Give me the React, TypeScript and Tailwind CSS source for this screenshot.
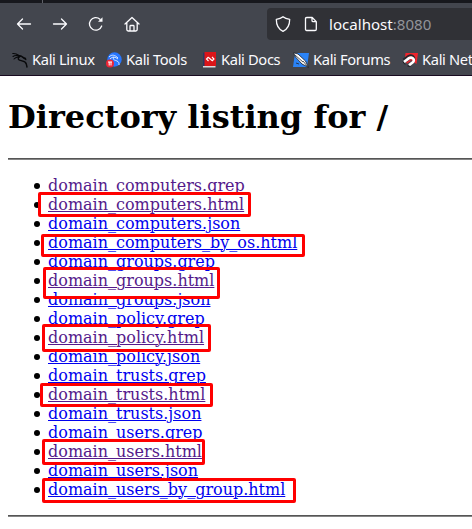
import type { ReactNode } from 'react';

type Entry = { name: string; visited?: boolean; mark?: string };

const entries: Entry[] = [
  { name: 'domain_computers.grep', visited: true },
  { name: 'domain_computers.html', visited: true, mark: '-left-[10px] -top-[3px] w-[213px] h-[25px]' },
  { name: 'domain_computers.json' },
  { name: 'domain_computers_by_os.html', mark: '-left-[7px] top-[1px] w-[264px] h-[23px]' },
  { name: 'domain_groups.grep' },
  { name: 'domain_groups.html', visited: true, mark: '-left-[5px] -top-[4px] w-[177px] h-[32px]' },
  { name: 'domain_groups.json' },
  { name: 'domain_policy.grep' },
  { name: 'domain_policy.html', visited: true, mark: '-left-[6px] -top-[4px] w-[169px] h-[28px]' },
  { name: 'domain_policy.json' },
  { name: 'domain_trusts.grep' },
  { name: 'domain_trusts.html', visited: true, mark: '-left-[8px] -top-[2px] w-[173px] h-[24px]' },
  { name: 'domain_trusts.json' },
  { name: 'domain_users.grep' },
  { name: 'domain_users.html', visited: true, mark: '-left-[6px] -top-[3px] w-[163px] h-[26px]' },
  { name: 'domain_users.json' },
  { name: 'domain_users_by_group.html', mark: '-left-[6px] -top-[2px] w-[254px] h-[25px]' },
];

function Glyph({ children }: { children: ReactNode }) {
  return (
    <svg width="16" height="16" viewBox="0 0 16 16" fill="none" stroke="#fbfbfe" strokeWidth="1.3" strokeLinecap="round" strokeLinejoin="round" className="shrink-0">
      {children}
    </svg>
  );
}

function Dragon({ color }: { color: string }) {
  return (
    <g fill="none" stroke={color} strokeLinecap="round" strokeLinejoin="round">
      <path d="M.7 1.5C3 1.2 5 2 6.700 3.500M1 4.500C3 3 5 3.200 7.500 4.200M2 7C3.500 5.300 5 5 7 5" strokeWidth="1.100" />
      <path d="M5 3.500C8 3.300 10 4.300 11.300 5.600L13.500 6.500M8.500 4C6 5 5.500 7.200 7.500 8.200C10 9.300 13.500 8.500 14.300 12L15 15" strokeWidth="1.400" />
      <path d="M11 5.500L13.800 7.600" strokeWidth="1.300" />
    </g>
  );
}

function LinuxIcon() {
  return <svg width="16" height="16" viewBox="0 0 16 16"><Dragon color="#08090b" /></svg>;
}

function ToolsIcon() {
  return (
    <svg width="16" height="16" viewBox="0 0 16 16">
      <circle cx="8.500" cy="7.500" r="7.200" fill="#2777ff" />
      <path d="M3 5C6 2 9 3 12 6M4 7C7 4 9 5 12 7M8 5C6 8 9 8 11 9C13 10 13 11 13 13" fill="none" stroke="#d8e8ff" strokeWidth="1" />
      <circle cx="4" cy="11.500" r="4" fill="#ee2535" />
      <path d="M2 10H6M3.200 10V13.500M5 10V13.500" stroke="#fff" strokeWidth="1" />
    </svg>
  );
}

function DocsIcon() {
  return (
    <svg width="13" height="16" viewBox="0 0 13 16">
      <path d="M0 1L2 0V14L0 15Z" fill="#293764" />
      <path d="M1.500 0H13V14H1.500Z" fill="#db1519" />
      <path d="M0 14H12.500V15.500H0Z" fill="#ddd9dc" />
      <path d="M5.500 5L3.500 7L5.500 9M9 5L11 7L9 9M5.500 5.500L9 8.500" fill="none" stroke="#fff" strokeWidth="1.100" />
    </svg>
  );
}

function ForumsIcon() {
  return (
    <svg width="16" height="16" viewBox="0 0 16 16">
      <path d="M2 1H16L14 15H0Z" fill="#2b83f6" />
      <path d="M.5.800L5 2L12.500 9L15.500 15.300L9 12L2.500 5Z" fill="#fff" stroke="#17191e" strokeWidth=".8" />
      <path d="M2 3L10 10M10 9L14.500 14.500M3 11L6 12" stroke="#22252c" strokeWidth=".8" />
    </svg>
  );
}

function HunterIcon() {
  return (
    <svg width="16" height="16" viewBox="0 0 16 16">
      <path d="M3.500 1H16L14.500 12L9 8L3 5Z" fill="#ef242c" />
      <path d="M1.200 7.500L6.500 3.800C10 2 13 5 12.500 7.500" stroke="#25272d" strokeWidth="1.800" fill="none" />
      <path d="M2 10L7 6.200C10.500 4.200 13.500 8 10.800 10.300L7 13.300" stroke="#fff" strokeWidth="2.600" fill="none" />
      <path d="M4.500 11L8.500 8.300" stroke="#e52931" strokeWidth="1.600" />
      <path d="M.8 9.500L3 12.500M5.500 14L8.500 14.500" stroke="#1b1d22" strokeWidth="1" />
    </svg>
  );
}

function Bookmark({ icon, children, className }: { icon: ReactNode; children: string; className: string }) {
  return (
    <div className={`flex shrink-0 items-center gap-1 ${className}`}>
      <span className="flex w-4 justify-center">{icon}</span>
      <span className="pb-[2px] whitespace-nowrap">{children}</span>
    </div>
  );
}

export default function App() {
  return (
    <div className="h-[529px] w-[472px] overflow-hidden bg-white">
      <header className="h-[76px] overflow-hidden border-b border-[#180a20] bg-[#43464e] font-['Noto_Sans',sans-serif] text-[14.7px] text-[#fbfbfe]">
        <div className="flex h-[3px] bg-[#17181d]"><div className="ml-[42px] w-px bg-[#606269]" /></div>
        <div className="flex h-[42px] items-center pl-4">
          <nav className="flex w-[251px] shrink-0 gap-5">
            <Glyph><path d="M14.500 8H1.500M6.500 3L1.500 8L6.500 13" /></Glyph>
            <Glyph><path d="M1.500 8H14.500M9.500 3L14.500 8L9.500 13" /></Glyph>
            <Glyph><path d="M13.700 10A6.300 6.300 0 1 1 12 3.200" /><path d="M14.500 1.200V5.700H10Z" fill="#fbfbfe" stroke="none" /></Glyph>
            <Glyph><path d="M1 8L8 1.500L15 8M2.800 6.800V13.600Q2.800 15 4.200 15H11.800Q13.200 15 13.200 13.600V6.800M6 15V10.300Q6 9.500 6.800 9.500H9.200Q10 9.500 10 10.300V15" /></Glyph>
          </nav>
          <div className="flex h-8 w-[230px] shrink-0 items-center rounded-[4px] bg-[#303136] pl-2">
            <Glyph><path d="M8 .700C6 2.500 4 3 1.300 3.300C1.300 9 2.800 13 8 15.300C13.200 13 14.700 9 14.700 3.300C12 3 10 2.500 8 .700Z" /></Glyph>
            <span className="ml-3 flex"><Glyph><path d="M3.700 1.500H9.200L13.300 5.600V13.200Q13.300 14.500 12 14.500H3.700Q2.500 14.500 2.500 13.200V2.700Q2.500 1.500 3.700 1.500ZM9 1.500V4.500Q9 5.700 10.200 5.700H13.300" /></Glyph></span>
            <span className="ml-[10px] text-[15.1px]">localhost<span className="text-[#92949a]">:8080</span></span>
          </div>
        </div>
        <div className="flex h-[30px] items-center pl-3 tracking-[-0.35px]">
          <Bookmark icon={<LinuxIcon />} className="w-[94px]">Kali Linux</Bookmark>
          <Bookmark icon={<ToolsIcon />} className="w-[95px]">Kali Tools</Bookmark>
          <Bookmark icon={<DocsIcon />} className="w-[92px]">Kali Docs</Bookmark>
          <Bookmark icon={<ForumsIcon />} className="w-[109px]">Kali Forums</Bookmark>
          <Bookmark icon={<HunterIcon />} className="w-[70px]">Kali Net</Bookmark>
        </div>
      </header>
      <main className="pl-2 font-['DejaVu_Serif',serif] text-black">
        <h1 className="pt-[23px] text-[32px] leading-[37px] font-bold">Directory listing for /</h1>
        <hr className="mt-[22px] h-[2px] border-t border-b border-t-[#555] border-b-[#858585]" />
        <ul className="my-4 pl-10 text-[16px] leading-[19px]">
          {entries.map((entry) => (
            <li key={entry.name} className="relative flex h-[19px] whitespace-nowrap">
              <span className="mt-[7px] -ml-[14px] mr-2 size-[6px] shrink-0 rounded-full bg-black" />
              <a className={`underline decoration-1 ${entry.visited ? 'text-[#551a8b]' : 'text-[#0000ee]'}`}>{entry.name}</a>
              {entry.mark && <span className={`absolute z-10 rounded-[2px] border-3 border-[#ff0000] ${entry.mark}`} />}
            </li>
          ))}
        </ul>
        <hr className="h-[2px] border-t border-b border-t-[#555] border-b-[#858585]" />
      </main>
    </div>
  );
}
